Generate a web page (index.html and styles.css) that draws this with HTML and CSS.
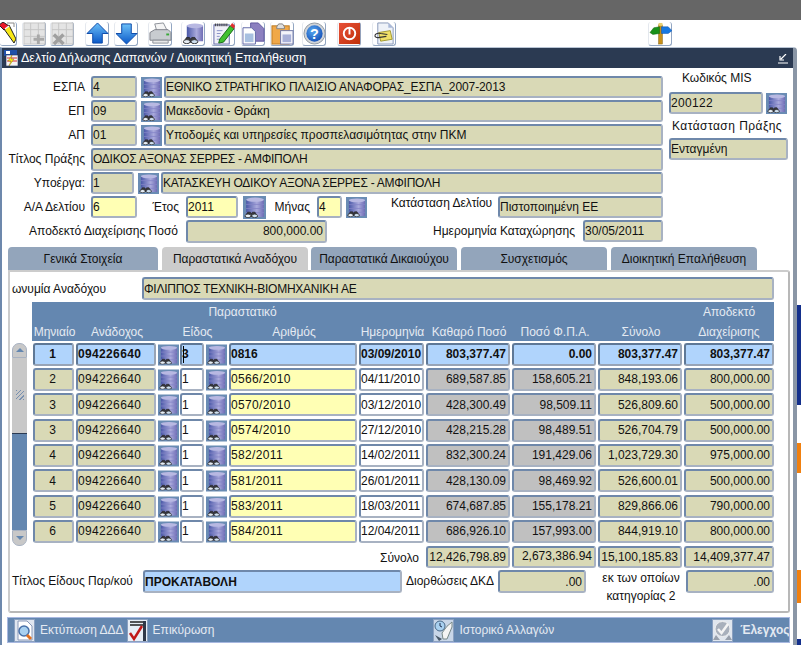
FILE: index.html
```html
<!DOCTYPE html>
<html lang="el">
<head>
<meta charset="utf-8">
<title>Δελτίο Δήλωσης Δαπανών</title>
<link rel="stylesheet" href="styles.css">
</head>
<body>
<svg class="defs" width="0" height="0">
  <defs>
    <linearGradient id="cyl" x1="0" x2="1" y1="0" y2="0"><stop offset="0" stop-color="#4a58a8"/><stop offset=".6" stop-color="#aaaadc"/><stop offset="1" stop-color="#6e6cb4"/></linearGradient>
    <linearGradient id="arrowUp" x1="0" x2="0" y1="0" y2="1"><stop offset="0" stop-color="#6cc0f8"/><stop offset="1" stop-color="#0a58c8"/></linearGradient>
    <linearGradient id="stop" x1="0" x2="1" y1="0" y2="1"><stop offset="0" stop-color="#e85038"/><stop offset="1" stop-color="#c03008"/></linearGradient>
    <radialGradient id="help" cx=".4" cy=".35" r=".7"><stop offset="0" stop-color="#58a8f0"/><stop offset="1" stop-color="#1450b8"/></radialGradient>
    <symbol id="binoc" viewBox="0 0 14 8">
      <path d="M1 7 L3.500 2.500 H6 L7 4 L8 2.500 H10.500 L13 7" fill="#3a3a40" stroke="#222" stroke-width=".6"/>
      <ellipse cx="3.800" cy="6" rx="2.800" ry="1.700" fill="#e6edf5" stroke="#222" stroke-width=".7"/>
      <ellipse cx="10.200" cy="6" rx="2.800" ry="1.700" fill="#cfe0f0" stroke="#222" stroke-width=".7"/>
    </symbol>
    <symbol id="lov" viewBox="0 0 22 22">
      <rect width="22" height="22" fill="#6a8cb4"/>
      <path d="M3 3.500 Q11 0.500 20 3.500 V20 H3Z" fill="url(#cyl)"/>
      <path d="M3 8 H20 M3 12 H20 M3 16 H20" stroke="#8484c6" stroke-width=".8"/>
      <ellipse cx="11.500" cy="3.500" rx="8.500" ry="2" fill="#b8b8e2"/>
      <use href="#binoc" x="1" y="13" width="14" height="8"/>
    </symbol>
  </defs>
</svg>
<div class="screen">
  <div class="topbar"></div>
  <div class="toolbar">
    <div class="tb tb-first"><svg viewBox="0 0 16 23"><path d="M7 1 H14 V5" fill="none" stroke="#8a8a8a"/><path d="M4 7 L9 3 L16 17 L14 21Z" fill="#f8e818" stroke="#222"/><path d="M-1 3 L3 0 L9 4 L4 8Z" fill="#e81828" stroke="#222"/><path d="M5 7 L9 4" stroke="#fff" stroke-width="1.500"/></svg></div>
    <div class="tb"><svg viewBox="0 0 24 24"><path d="M1 1 H23 V23 H1Z M1 8 H23 M1 15 H23 M8 1 V23 M16 1 V23" fill="#e4e4e4" stroke="#c4c4c4"/><path d="M16 13 V23 M11 18 H22" stroke="#a8a8a8" stroke-width="3"/></svg></div>
    <div class="tb"><svg viewBox="0 0 24 24"><path d="M1 1 H23 V23 H1Z M1 8 H23 M1 15 H23 M8 1 V23 M16 1 V23" fill="#e4e4e4" stroke="#c4c4c4"/><path d="M3 13 L13 23 M13 13 L3 23" stroke="#a0a0a0" stroke-width="3.500"/></svg></div>
    <div class="tb"><svg viewBox="0 0 24 24"><path d="M12 1 L23 12 H17 V22 H7 V12 H1Z" fill="url(#arrowUp)" stroke="#0a48a8"/></svg></div>
    <div class="tb"><svg viewBox="0 0 24 24"><path d="M12 23 L23 12 H17 V2 H7 V12 H1Z" fill="url(#arrowUp)" stroke="#0a48a8"/></svg></div>
    <div class="tb"><svg viewBox="0 0 24 24"><path d="M6 2 L15 1 L19 9 H8Z" fill="#f4f4f4" stroke="#8c9098"/><path d="M1 11 L6 8 H20 L23 11 V19 H1Z" fill="#c8ccd0" stroke="#7c8088"/><path d="M4 19 H20 V22 H4Z" fill="#e8e8e8" stroke="#8c9098"/><rect x="18" y="12" width="3" height="2" fill="#38a838"/></svg></div>
    <div class="tb"><svg viewBox="0 0 24 24"><path d="M5 4 Q13 0 22 4 V20 H5Z" fill="url(#cyl)"/><ellipse cx="13.500" cy="4" rx="8.500" ry="2.500" fill="#b8b8e2"/><use href="#binoc" x="0" y="13" width="18" height="10"/></svg></div>
    <div class="tb"><svg viewBox="0 0 24 24"><rect x="2" y="3" width="16" height="20" fill="#f0f0f8" stroke="#6068a8"/><path d="M3 3 H17" stroke="#333" stroke-width="3" stroke-dasharray="1 1"/><path d="M5 9 H11 M5 12 H9 M5 15 H8 M5 18 H13" stroke="#8890c8"/><path d="M8 18 L19 4 L23 7 L12 21 L7 22Z" fill="#40c030" stroke="#186818"/><path d="M19 4 L21 1 L24 4 L23 7Z" fill="#e03030"/></svg></div>
    <div class="tb"><svg viewBox="0 0 24 24"><path d="M9 1 H17 L23 7 V20 H9Z" fill="#8c80c0" stroke="#6058a0"/><path d="M1 6 H10 L14 10 V23 H1Z" fill="#fff" stroke="#6068a8"/><rect x="3" y="12" width="9" height="9" fill="#a8c0e0"/></svg></div>
    <div class="tb"><svg viewBox="0 0 24 24"><rect x="1" y="4" width="18" height="19" fill="#f0a848" stroke="#b87820"/><path d="M6 5 L8 2 H12 L14 5 V7 H6Z" fill="#e0e0e0" stroke="#808080"/><rect x="10" y="9" width="13" height="14" fill="#f4f4fa" stroke="#7078a8"/><rect x="12" y="13" width="9" height="8" fill="#a8b0d8"/></svg></div>
    <div class="tb"><svg viewBox="0 0 24 24"><circle cx="12" cy="12" r="11" fill="#d0d4d8" stroke="#9098a0"/><circle cx="12" cy="12" r="8.500" fill="url(#help)"/><text x="12" y="17.500" class="help-mark" text-anchor="middle">?</text></svg></div>
    <div class="tb"><svg viewBox="0 0 24 24"><rect x="1" y="1" width="22" height="22" fill="url(#stop)"/><circle cx="12" cy="12" r="6" fill="none" stroke="#fff" stroke-width="2"/><rect x="11" y="6" width="2" height="7" fill="#fff"/></svg></div>
    <div class="tb"><svg viewBox="0 0 24 24"><path d="M5 1 H16 L21 6 V23 H5Z" fill="#eef2f8" stroke="#8898b8"/><path d="M16 1 V6 H21Z" fill="#a8b8d8"/><path d="M6 11 L18 9 L20 18 L8 20Z" fill="#f0e068" stroke="#a09830"/><path d="M2 14 Q3 11 8 12 L15 13 M2 14 Q2 17 7 16 L14 15" fill="none" stroke="#333" stroke-width="1.200"/></svg></div>
    <div class="tb tb-last"><svg viewBox="0 0 24 24"><rect x="10" y="3" width="4" height="20" fill="#c89018" stroke="#806010" stroke-width=".5"/><rect x="10" y="1" width="4" height="3" fill="#e8d070"/><path d="M11 5 L5 6 L1 11 L4 13 L11 12Z" fill="#189018" stroke="#0c600c" stroke-width=".5"/><path d="M13 5 H20 L24 9 L20 12 H13Z" fill="#1878e0" stroke="#0c50a8" stroke-width=".5"/></svg></div>
  </div>

  <div class="main">
    <div class="window">
      <div class="titlebar">
        <svg class="title-icon" viewBox="0 0 16 16"><rect x="1" y="0" width="13" height="6" fill="#2050a8"/><rect x="3" y="1" width="4" height="3" fill="#fff"/><rect x="3" y="5" width="12" height="11" fill="#f4f4f4" stroke="#203060" stroke-width=".6"/><path d="M4 8 H14 M4 11 H14" stroke="#d83030"/><path d="M9 5 L5 11 H8 L6 16 L11 9 H8Z" fill="#f8e818" stroke="#806000" stroke-width=".4"/></svg>
        <span class="title-text">Δελτίο Δήλωσης Δαπανών / Διοικητική Επαλήθευση</span>
        <svg class="title-min" viewBox="0 0 10 10"><path d="M8 0 L3 5 M2 2 V6 H6 M0 9 H10" fill="none" stroke="#fff" stroke-width="1.200"/></svg>
      </div>

      <div class="form-top">
        <div class="form-left">
          <div class="row">
            <span class="lbl">ΕΣΠΑ</span><span class="fld w46">4</span>
            <svg class="lov gap4"><use href="#lov"/></svg><span class="fld grow gap2 caps-soft">ΕΘΝΙΚΟ ΣΤΡΑΤΗΓΙΚΟ ΠΛΑΙΣΙΟ ΑΝΑΦΟΡΑΣ_ΕΣΠΑ_2007-2013</span>
          </div>
          <div class="row">
            <span class="lbl">ΕΠ</span><span class="fld w46">09</span>
            <svg class="lov gap4"><use href="#lov"/></svg><span class="fld grow gap2">Μακεδονία - Θράκη</span>
          </div>
          <div class="row">
            <span class="lbl">ΑΠ</span><span class="fld w46">01</span>
            <svg class="lov gap4"><use href="#lov"/></svg><span class="fld grow gap2">Υποδομές και υπηρεσίες προσπελασιμότητας στην ΠΚΜ</span>
          </div>
          <div class="row">
            <span class="lbl">Τίτλος Πράξης</span><span class="fld grow tall caps">ΟΔΙΚΟΣ ΑΞΟΝΑΣ ΣΕΡΡΕΣ - ΑΜΦΙΠΟΛΗ</span>
          </div>
          <div class="row">
            <span class="lbl">Υποέργα:</span><span class="fld w43">1</span>
            <svg class="lov gap4"><use href="#lov"/></svg><span class="fld grow gap2 caps">ΚΑΤΑΣΚΕΥΗ ΟΔΙΚΟΥ ΑΞΟΝΑ ΣΕΡΡΕΣ - ΑΜΦΙΠΟΛΗ</span>
          </div>
          <div class="row">
            <span class="lbl">Α/Α Δελτίου</span><span class="fld yellow w46">6</span>
            <span class="lbl-etos">Έτος</span><span class="fld yellow w52">2011</span>
            <svg class="lov lov-wide gap5"><use href="#lov"/></svg>
            <span class="lbl-minas">Μήνας</span><span class="fld yellow w25">4</span>
            <svg class="lov gap4"><use href="#lov"/></svg>
            <span class="lbl-kat">Κατάσταση Δελτίου</span><span class="fld grow">Πιστοποιημένη ΕΕ</span>
          </div>
          <div class="row">
            <span class="lbl lbl-wide">Αποδεκτό Διαχείρισης Ποσό</span><span class="fld num tall w141">800,000.00</span>
            <span class="lbl-date">Ημερομηνία Καταχώρησης</span><span class="fld grow">30/05/2011</span>
          </div>
        </div>
        <div class="form-right">
          <div class="mis-label">Κωδικός MIS</div>
          <div class="mis-row"><span class="fld w94 spaced">200122</span><svg class="lov gap3"><use href="#lov"/></svg></div>
          <div class="state-label">Κατάσταση Πράξης</div>
          <div class="fld state">Ενταγμένη</div>
        </div>
      </div>

      <div class="tabs">
        <div class="tab">Γενικά Στοιχεία</div>
        <div class="tab active">Παραστατικά Αναδόχου</div>
        <div class="tab">Παραστατικά Δικαιούχου</div>
        <div class="tab">Συσχετισμός</div>
        <div class="tab">Διοικητική Επαλήθευση</div>
      </div>

      <div class="panel">
        <div class="contractor">
          <span class="contractor-label">ωνυμία Αναδόχου</span><span class="fld tall contractor-field caps">ΦΙΛΙΠΠΟΣ ΤΕΧΝΙΚΗ-ΒΙΟΜΗΧΑΝΙΚΗ ΑΕ</span>
        </div>

        <div class="thead cols">
          <div class="th-group">Παραστατικό</div>
          <div class="th-top-last">Αποδεκτό</div>
          <div class="th">Μηνιαίο</div>
          <div class="th">Ανάδοχος</div>
          <div class="th th-eidos">Είδος</div>
          <div class="th th-arith">Αριθμός</div>
          <div class="th">Ημερομηνία</div>
          <div class="th">Καθαρό Ποσό</div>
          <div class="th">Ποσό Φ.Π.Α.</div>
          <div class="th">Σύνολο</div>
          <div class="th">Διαχείρισης</div>
        </div>

        <div class="table-body">
          <div class="scroll">
            <div class="scroll-btn scroll-up"><span class="tri-up"></span></div>
            <div class="scroll-thumb"><span class="grip"></span></div>
            <div class="scroll-track"></div>
            <div class="scroll-btn scroll-down"><span class="tri-down"></span></div>
          </div>
          <div class="rows">
            <div class="cols trow selected">
              <span class="fld mid">1</span><span class="fld spaced">094226640</span><svg class="lov"><use href="#lov"/></svg><span class="fld caret-cell"><i class="caret"></i>3</span><svg class="lov"><use href="#lov"/></svg><span class="fld">0816</span><span class="fld">03/09/2010</span><span class="fld num">803,377.47</span><span class="fld num">0.00</span><span class="fld num">803,377.47</span><span class="fld num last">803,377.47</span>
            </div>
            <div class="cols trow">
              <span class="fld mid">2</span><span class="fld spaced">094226640</span><svg class="lov"><use href="#lov"/></svg><span class="fld white">1</span><svg class="lov"><use href="#lov"/></svg><span class="fld yellow spaced">0566/2010</span><span class="fld white">04/11/2010</span><span class="fld num grey">689,587.85</span><span class="fld num grey">158,605.21</span><span class="fld num">848,193.06</span><span class="fld num last">800,000.00</span>
            </div>
            <div class="cols trow">
              <span class="fld mid">3</span><span class="fld spaced">094226640</span><svg class="lov"><use href="#lov"/></svg><span class="fld white">1</span><svg class="lov"><use href="#lov"/></svg><span class="fld yellow spaced">0570/2010</span><span class="fld white">03/12/2010</span><span class="fld num grey">428,300.49</span><span class="fld num grey">98,509.11</span><span class="fld num">526,809.60</span><span class="fld num last">500,000.00</span>
            </div>
            <div class="cols trow">
              <span class="fld mid">3</span><span class="fld spaced">094226640</span><svg class="lov"><use href="#lov"/></svg><span class="fld white">1</span><svg class="lov"><use href="#lov"/></svg><span class="fld yellow spaced">0574/2010</span><span class="fld white">27/12/2010</span><span class="fld num grey">428,215.28</span><span class="fld num grey">98,489.51</span><span class="fld num">526,704.79</span><span class="fld num last">500,000.00</span>
            </div>
            <div class="cols trow">
              <span class="fld mid">4</span><span class="fld spaced">094226640</span><svg class="lov"><use href="#lov"/></svg><span class="fld white">1</span><svg class="lov"><use href="#lov"/></svg><span class="fld yellow spaced">582/2011</span><span class="fld white">14/02/2011</span><span class="fld num grey">832,300.24</span><span class="fld num grey">191,429.06</span><span class="fld num">1,023,729.30</span><span class="fld num last">975,000.00</span>
            </div>
            <div class="cols trow">
              <span class="fld mid">4</span><span class="fld spaced">094226640</span><svg class="lov"><use href="#lov"/></svg><span class="fld white">1</span><svg class="lov"><use href="#lov"/></svg><span class="fld yellow spaced">581/2011</span><span class="fld white">26/01/2011</span><span class="fld num grey">428,130.09</span><span class="fld num grey">98,469.92</span><span class="fld num">526,600.01</span><span class="fld num last">500,000.00</span>
            </div>
            <div class="cols trow">
              <span class="fld mid">5</span><span class="fld spaced">094226640</span><svg class="lov"><use href="#lov"/></svg><span class="fld white">1</span><svg class="lov"><use href="#lov"/></svg><span class="fld yellow spaced">583/2011</span><span class="fld white">18/03/2011</span><span class="fld num grey">674,687.85</span><span class="fld num grey">155,178.21</span><span class="fld num">829,866.06</span><span class="fld num last">790,000.00</span>
            </div>
            <div class="cols trow">
              <span class="fld mid">6</span><span class="fld spaced">094226640</span><svg class="lov"><use href="#lov"/></svg><span class="fld white">1</span><svg class="lov"><use href="#lov"/></svg><span class="fld yellow spaced">584/2011</span><span class="fld white">12/04/2011</span><span class="fld num grey">686,926.10</span><span class="fld num grey">157,993.00</span><span class="fld num">844,919.10</span><span class="fld num last">800,000.00</span>
            </div>
            <div class="cols trow totals">
              <span class="total-label">Σύνολο</span><span class="fld num">12,426,798.89</span><span class="fld num raised">2,673,386.94</span><span class="fld num">15,100,185.83</span><span class="fld num last">14,409,377.47</span>
            </div>
          </div>
        </div>

        <div class="footer-row">
          <span class="foot-title">Τίτλος Είδους Παρ/κού</span>
          <span class="fld foot-blue">ΠΡΟΚΑΤΑΒΟΛΗ</span>
          <span class="foot-corr">Διορθώσεις ΔΚΔ</span>
          <span class="fld num foot-val">.00</span>
          <span class="foot-cat">εκ των οποίων<br>κατηγορίας 2</span>
          <span class="fld num foot-val">.00</span>
        </div>
      </div>

      <div class="actions">
        <svg class="act-icon" viewBox="0 0 21 23"><rect x=".5" y=".5" width="20" height="22" fill="#dfe6f0" stroke="#8aa0c0"/><path d="M4 2 H13 L18 7 V21 H4Z" fill="#fff" stroke="#8898b8"/><circle cx="10" cy="12" r="5" fill="#a8d0f0" stroke="#4870a8" stroke-width="1.500"/><path d="M13 16 L17 20" stroke="#e07020" stroke-width="3"/></svg>
        <span class="act-text t1">Εκτύπωση ΔΔΔ</span>
        <svg class="act-icon a2" viewBox="0 0 21 23"><rect x=".5" y=".5" width="20" height="22" fill="#e8eef6" stroke="#8aa0c0"/><path d="M3 3 H18 M3 6 H16" stroke="#222" stroke-width="1.500"/><rect x="16" y="2" width="3" height="20" fill="#303848"/><path d="M3 14 L7 20 L15 7" fill="none" stroke="#c01818" stroke-width="2.500"/></svg>
        <span class="act-text">Επικύρωση</span>
        <svg class="act-icon a3" viewBox="0 0 21 23"><rect x=".5" y=".5" width="20" height="22" fill="#c8d6e8" stroke="#8aa0c0"/><circle cx="7" cy="7" r="5" fill="#a8d0f0" stroke="#486888"/><path d="M7 4 V7 L9 8" stroke="#203050" fill="none"/><path d="M9 14 Q14 6 19 3 V8 L14 20 H10Z" fill="#f4f4f4" stroke="#778888"/><path d="M2 16 L9 20 L6 22Z" fill="#485868"/></svg>
        <span class="act-text">Ιστορικό Αλλαγών</span>
        <svg class="act-icon a4" viewBox="0 0 21 23"><rect x=".5" y=".5" width="20" height="22" fill="#e0e6ee" stroke="#8aa0c0"/><circle cx="10.500" cy="10" r="7.500" fill="#a8b0bc" stroke="#f0f0f0"/><path d="M6 10 L9.500 14 L16 5" fill="none" stroke="#f4f4f4" stroke-width="2.500"/><path d="M4 16 L1 21 H8Z M17 16 L20 21 H13Z" fill="#98a0ac"/></svg>
        <span class="act-text strong">Έλεγχος</span>
      </div>
    </div>
    <div class="desktop"></div>
  </div>
</div>
</body>
</html>
```

FILE: styles.css
```css
* { box-sizing: border-box; }

html, body {
  margin: 0;
  padding: 0;
  background: #fff;
}

body {
  font: 12px/1 "Liberation Sans", Arial, sans-serif;
  color: #111;
  overflow: hidden;
}

.defs { display: block; height: 0; }

.screen {
  width: 801px;
  height: 645px;
  overflow: hidden;
  background: #fff;
}

.topbar { height: 20px; background: #666; }

.toolbar {
  height: 27px;
  padding-top: 2px;
  display: grid;
  grid-template-columns: 22px 28px 35px 29px 34px 33px 30px 30px 29px 32px 35px 35px 276px 24px;
}

.tb {
  width: 24px;
  height: 24px;
  border-right: 1px solid #92a6c2;
  border-bottom: 1px solid #92a6c2;
  border-left: 1px solid #e4e8ee;
  border-radius: 3px;
}
.tb svg { display: block; width: 23px; height: 23px; overflow: hidden; }
.tb-first { width: 17px; border-left: 0; }
.tb-first svg { width: 16px; }
.help-mark { font: bold 15px "Liberation Sans", sans-serif; fill: #fff; }

.main { display: flex; height: 598px; }

.window {
  width: 797px;
  height: 598px;
  background: #fff;
  border-left: 2px solid #6d88ac;
  border-right: 4px solid #8a96a6;
  border-top: 1px solid #b8c4d4;
  border-top-right-radius: 4px;
  overflow: hidden;
}

.desktop {
  width: 4px;
  background: linear-gradient(to bottom,
    #fff 0, #fff 258px,
    #14308c 258px, #14308c 358px,
    #fff 358px, #fff 396px,
    #f08010 396px, #f08010 426px,
    #fff 426px, #fff 523px,
    #f08010 523px, #f08010 556px,
    #fff 556px, #fff 592px,
    #14308c 592px);
}

.titlebar {
  height: 20px;
  background: #2b3a52;
  color: #fff;
  display: flex;
  align-items: center;
  margin-right: -4px;
}
.title-icon { width: 16px; height: 16px; margin-left: 1px; }
.title-text { margin-left: 2px; font-size: 12.5px; }
.title-min { width: 10px; height: 10px; margin-left: auto; margin-right: 9px; margin-top: 2px; }

/* upper form */
.form-top { display: flex; padding-top: 7px; }
.form-left { width: 661px; }
.form-right { width: 122px; margin-left: 6px; }

.row { display: flex; align-items: center; height: 24px; }

.lbl {
  width: 83px;
  margin-right: 6px;
  text-align: right;
  white-space: nowrap;
}
.lbl-wide { width: 176px; margin-right: 8px; }

.fld {
  display: flex;
  align-items: center;
  height: 22px;
  padding: 0 2px 0 0;
  background: #d9d9b6;
  border: 2px solid;
  border-color: #6f88aa #a8b2c2 #a8b2c2 #6f88aa;
  border-radius: 3px;
  white-space: nowrap;
  overflow: hidden;
}
.fld.tall { height: 23px; }
.grow { flex: 1; min-width: 0; }
.yellow { background: #ffffb4; }
.white { background: #fff; }
.grey { background: #c0c0c0; }
.num { justify-content: flex-end; }
.mid { justify-content: center; }
.caps { letter-spacing: -.25px; }
.caps-soft { letter-spacing: -.1px; }
.spaced { letter-spacing: .35px; }

.w25 { width: 25px; }
.w43 { width: 43px; }
.w46 { width: 46px; }
.w52 { width: 52px; }
.w94 { width: 94px; }
.w141 { width: 141px; }

.lov { display: block; width: 21px; height: 21px; flex: none; }
.lov-wide { width: 23px; height: 23px; }
.gap2 { margin-left: 2px; }
.gap3 { margin-left: 3px; }
.gap4 { margin-left: 4px; }
.gap5 { margin-left: 5px; }

.lbl-etos { width: 42px; margin-right: 7px; text-align: right; }
.lbl-minas { width: 43px; margin-left: 1px; margin-right: 7px; text-align: right; }
.lbl-kat { width: 101px; margin-left: 24px; margin-right: 6px; margin-top: -9px; white-space: nowrap; letter-spacing: -.05px; }
.lbl-date { width: 148px; margin-left: 100px; margin-right: 8px; text-align: right; white-space: nowrap; }

.mis-label { height: 17px; padding-left: 13px; line-height: 7px; }
.mis-row { display: flex; align-items: center; height: 22px; }
.state-label { height: 24px; padding-left: 3px; padding-top: 6px; letter-spacing: .45px; white-space: nowrap; }
.state { width: 119px; }

/* tabs */
.tabs {
  display: grid;
  grid-template-columns: 154px 149px 150px 150px 150px;
  margin: 4px 0 0 6px;
  height: 23px;
}
.tab {
  display: flex;
  align-items: center;
  justify-content: center;
  height: 23px;
  margin-right: 4px;
  background: #93a5bb;
  border-radius: 4px 4px 0 0;
  white-space: nowrap;
  overflow: hidden;
}
.tab.active { background: #ccc; margin-right: 3px; }

/* panel */
.panel {
  width: 782px;
  height: 343px;
  margin-left: 6px;
  background: #fff;
  border: 2px solid #ccc;
  border-right-color: #b8b8b8;
  border-bottom-color: #b8b8b8;
  border-radius: 0 3px 3px 3px;
}

.contractor { display: flex; align-items: center; padding: 5px 0 0 2px; }
.contractor-label { width: 130px; white-space: nowrap; }
.contractor-field { width: 632px; }

.cols {
  display: grid;
  grid-template-columns: 43px 82px 22px 26px 23px 130px 67px 86px 86px 86px 90px;
}

.thead {
  margin: 2px 0 0 22px;
  width: 742px;
  height: 39px;
  padding-left: 1px;
  background: #6487b0;
  color: #e4eaf2;
  grid-template-rows: 20px 19px;
  align-items: center;
  text-align: center;
}
.th-group { grid-column: 3 / 7; grid-row: 1; padding-right: 32px; }
.th-top-last { grid-column: 11; grid-row: 1; }
.th { grid-row: 2; white-space: nowrap; }
.th:nth-child(3) { grid-column: 1; }
.th:nth-child(4) { grid-column: 2; }
.th-eidos { grid-column: 3 / 6; padding-left: 8px; }
.th-arith { grid-column: 6; }
.th:nth-child(7) { grid-column: 7; }
.th:nth-child(8) { grid-column: 8; }
.th:nth-child(9) { grid-column: 9; }
.th:nth-child(10) { grid-column: 10; }
.th:nth-child(11) { grid-column: 11; }

.table-body { display: flex; padding-top: 1.67px; }

.scroll {
  width: 15px;
  height: 203px;
  margin-left: 2px;
  margin-right: 6px;
  display: flex;
  flex-direction: column;
}
.scroll-btn {
  flex: none;
  height: 15px;
  background: #c8c8c8;
  border: 1px solid #a8b2c2;
  display: flex;
  align-items: center;
  justify-content: center;
}
.scroll-up { border-radius: 7px 7px 0 0; }
.scroll-down { border-radius: 0 0 7px 7px; height: 16px; }
.tri-up { border: 4px solid transparent; border-top: 0; border-bottom: 4px solid #6487b0; }
.tri-down { border: 4px solid transparent; border-bottom: 0; border-top: 4px solid #6487b0; }
.scroll-thumb {
  flex: none;
  height: 76px;
  background: #c8c8c8;
  border-bottom: 1px solid #2b3a52;
  display: flex;
  align-items: center;
  justify-content: center;
}
.grip {
  width: 8px;
  height: 10px;
  background: repeating-linear-gradient(135deg, #7890b0 0 1px, transparent 1px 3px);
}
.scroll-track { flex: 1; background: #6487b0; }

.rows { width: 741px; }
.trow { height: 25.33px; align-items: start; }
.trow .fld { height: 23px; margin-right: 2px; }
.trow .fld.last { margin-right: 0; }
.trow .lov { height: 22px; margin-top: 1px; }
.selected .fld { background: #b0d4fc; font-weight: bold; border-color: #5f7896 #98a4b6 #98a4b6 #5f7896; }
.caret-cell { position: relative; }
.caret { position: absolute; left: 1px; top: 1px; width: 1px; height: 17px; background: #000; }

.totals { height: 25px; }
.totals .fld { height: 22px; margin-top: 1px; }
.total-label { grid-column: 1 / 8; justify-self: end; padding-right: 7px; padding-top: 7px; }
.totals .fld:nth-child(2) { grid-column: 8; }
.raised { padding-bottom: 3px; }

.footer-row { display: flex; align-items: flex-start; padding: 0 0 0 2px; }
.foot-title { width: 131px; padding-top: 5px; white-space: nowrap; }
.foot-blue { width: 259px; height: 23px; background: #b0d4fc; font-weight: bold; }
.foot-corr { width: 96px; padding-left: 4px; padding-top: 5px; white-space: nowrap; }
.foot-val { width: 88px; height: 23px; }
.foot-cat { width: 100px; padding-left: 10px; text-align: center; line-height: 18px; margin-top: -1px; white-space: nowrap; }

/* bottom action bar */
.actions {
  display: flex;
  align-items: center;
  width: 783px;
  height: 26px;
  margin: 4px 0 0 5px;
  padding-left: 6px;
  background: #6487b0;
  border: 1px solid #a8b8e0;
  color: #e4eaf2;
  overflow: hidden;
  white-space: nowrap;
}
.act-icon { flex: none; width: 21px; height: 23px; }
.act-text { margin-left: 5px; }
.t1 { width: 84px; }
.a2 { margin-left: 3px; }
.a3 { margin-left: 219px; }
.a4 { margin-left: 158px; }
.strong { font-weight: bold; margin-left: 7px; }
```
